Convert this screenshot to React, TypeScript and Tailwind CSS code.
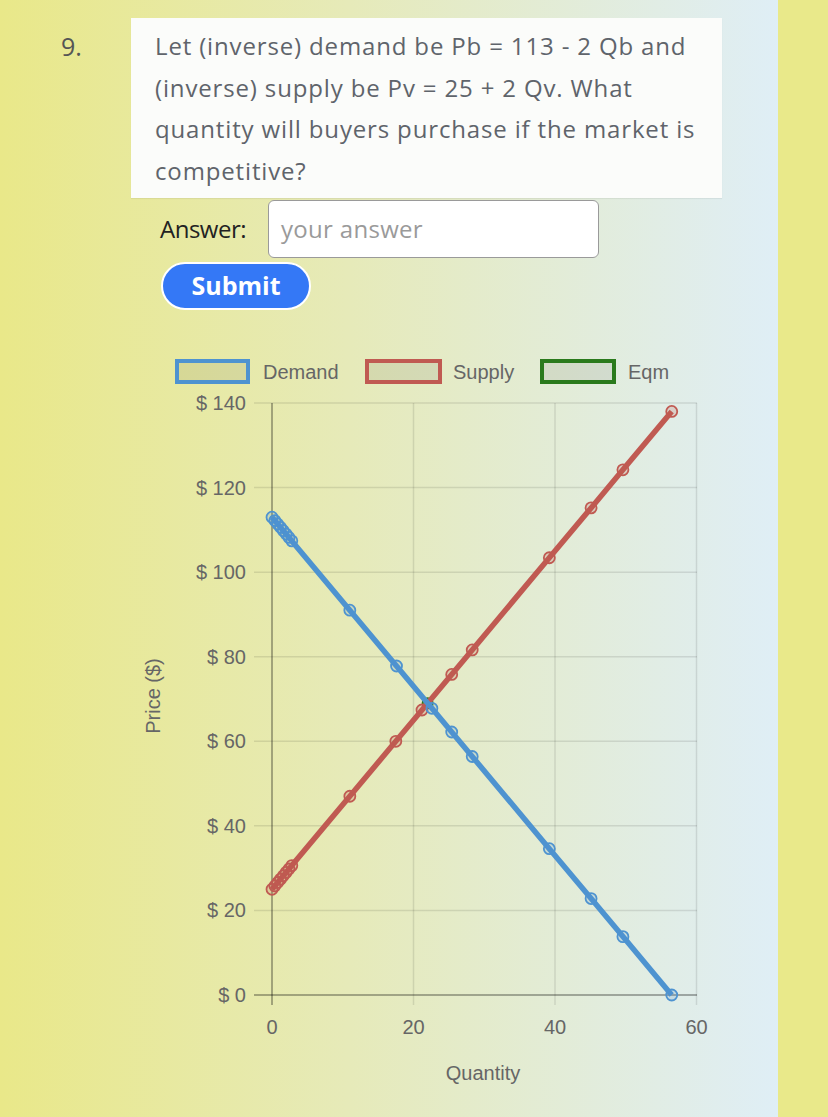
import React from "react";

const xPx = (q: number) => 272 + q * 7.075;
const yPx = (p: number) => 994 - p * (592 / 140);
const OX = 130;
const OY = 340;

const cluster = [0, 0.4, 0.8, 1.2, 1.6, 2.0, 2.4, 2.8];
const demandQ = [...cluster, 11, 17.6, 22.6, 25.4, 28.3, 39.2, 45.1, 49.6, 56.5];
const supplyQ = [...cluster, 11, 17.5, 21.2, 25.4, 28.3, 39.2, 45.1, 49.6, 56.5];

const BLUE = "#4e93d0";
const RED = "#c05a52";
const GREEN = "#2a7a1c";

function Series({ qs, f, color, fill }: { qs: number[]; f: (q: number) => number; color: string; fill: string }) {
  const pts = qs.map((q) => [xPx(q) - OX, yPx(f(q)) - OY]);
  const d = pts.map((p, i) => `${i === 0 ? "M" : "L"}${p[0].toFixed(1)} ${p[1].toFixed(1)}`).join(" ");
  return (
    <g>
      <path d={d} fill="none" stroke={color} strokeWidth={5.5} strokeLinejoin="round" />
      {pts.map((p, i) => (
        <circle key={i} cx={p[0]} cy={p[1]} r={5.5} fill={fill} stroke={color} strokeWidth={1.8} />
      ))}
    </g>
  );
}

function Chart() {
  const font = "'Liberation Sans', Arial, sans-serif";
  const yTicks = [0, 20, 40, 60, 80, 100, 120, 140];
  const xTicks = [0, 20, 40, 60];
  return (
    <svg width={600} height={760} viewBox="0 0 600 760" className="block" style={{ fontFamily: font }}>
      <g>
        <rect x={177 - OX} y={360 - OY} width={71} height={21} fill="rgba(0,0,0,0.07)" stroke={BLUE} strokeWidth={4} />
        <text x={263 - OX} y={371 - OY} fontSize={20} fill="#666" dominantBaseline="central">Demand</text>
        <rect x={367 - OX} y={360 - OY} width={73} height={21} fill="rgba(0,0,0,0.07)" stroke={RED} strokeWidth={4} />
        <text x={453 - OX} y={371 - OY} fontSize={20} fill="#666" dominantBaseline="central">Supply</text>
        <rect x={542 - OX} y={360 - OY} width={72} height={21} fill="rgba(0,0,0,0.07)" stroke={GREEN} strokeWidth={4} />
        <text x={628 - OX} y={371 - OY} fontSize={20} fill="#666" dominantBaseline="central">Eqm</text>
      </g>
      {yTicks.map((p) => (
        <g key={p}>
          <line
            x1={254 - OX}
            x2={697 - OX}
            y1={yPx(p) - OY}
            y2={yPx(p) - OY}
            stroke={p === 0 ? "rgba(0,0,0,0.3)" : "rgba(0,0,0,0.1)"}
            strokeWidth={p === 0 ? 2 : 1.5}
          />
          <text x={246 - OX} y={yPx(p) - OY} fontSize={20} fill="#666" textAnchor="end" dominantBaseline="central">
            {`$ ${p}`}
          </text>
        </g>
      ))}
      {xTicks.map((q) => (
        <g key={q}>
          <line
            x1={xPx(q) - OX}
            x2={xPx(q) - OX}
            y1={402 - OY}
            y2={1004 - OY}
            stroke={q === 0 ? "rgba(0,0,0,0.3)" : "rgba(0,0,0,0.1)"}
            strokeWidth={q === 0 ? 2 : 1.5}
          />
          <text x={xPx(q) - OX} y={1026 - OY} fontSize={20} fill="#666" textAnchor="middle" dominantBaseline="central">
            {q}
          </text>
        </g>
      ))}
      <text
        x={0}
        y={0}
        fontSize={20}
        fill="#666"
        textAnchor="middle"
        dominantBaseline="central"
        transform={`translate(${153 - OX} ${695 - OY}) rotate(-90)`}
      >
        Price ($)
      </text>
      <text x={483 - OX} y={1072 - OY} fontSize={20} fill="#666" textAnchor="middle" dominantBaseline="central">
        Quantity
      </text>
      <circle cx={xPx(22) - OX} cy={yPx(69) - OY} r={5} fill="rgba(42,122,28,0.3)" stroke={GREEN} strokeWidth={2} />
      <Series qs={supplyQ} f={(q) => 25 + 2 * q} color={RED} fill="rgba(192,90,82,0.2)" />
      <Series qs={demandQ} f={(q) => 113 - 2 * q} color={BLUE} fill="rgba(78,147,208,0.2)" />
    </svg>
  );
}

export default function App() {
  const nun = { fontFamily: "'Open Sans', Lato, sans-serif" };
  return (
    <div className="flex w-[828px] min-h-[1117px]" style={nun}>
      <div className="w-[778px] min-h-[1117px] bg-[linear-gradient(to_right,#e9e889_0%,#e6eab9_45%,#dfeef6_100%)]">
        <div className="flex pt-[18px]">
          <div className="w-[131px] pl-[61px] pt-[16px] text-[25px] leading-none text-[#555]">9.</div>
          <div className="w-[591px] bg-[#fbfcfa] pl-[24px] pr-[10px] py-[7px] text-[24px] leading-[41.5px] tracking-[0.85px] whitespace-nowrap text-[#5f646b] shadow-[0_1px_1px_rgba(0,0,0,0.06)]">
            Let (inverse) demand be Pb = 113 - 2 Qb and
            <br />
            (inverse) supply be Pv = 25 + 2 Qv. What
            <br />
            quantity will buyers purchase if the market is
            <br />
            competitive?
          </div>
        </div>
        <div className="flex items-center pl-[160px] pt-[2px]">
          <span className="text-[24px] text-[#222] mr-[22px] tracking-[-0.5px]">Answer:</span>
          <div className="w-[331px] h-[58px] bg-white border-[1.5px] border-[#9a9a9a] rounded-[6px] flex items-center pl-[12px] text-[24px] text-[#9a9a9a] tracking-[0.3px]">
            your answer
          </div>
        </div>
        <div className="pl-[161px] pt-[4px]">
          <button className="w-[150px] h-[48px] rounded-full bg-[#3478f6] border-2 border-white text-white text-[25px] font-bold flex items-center justify-center">
            Submit
          </button>
        </div>
        <div className="pl-[130px] pt-[31px]">
          <Chart />
        </div>
      </div>
      <div className="w-[50px] min-h-[1117px] bg-[#e9e98a]" />
    </div>
  );
}
